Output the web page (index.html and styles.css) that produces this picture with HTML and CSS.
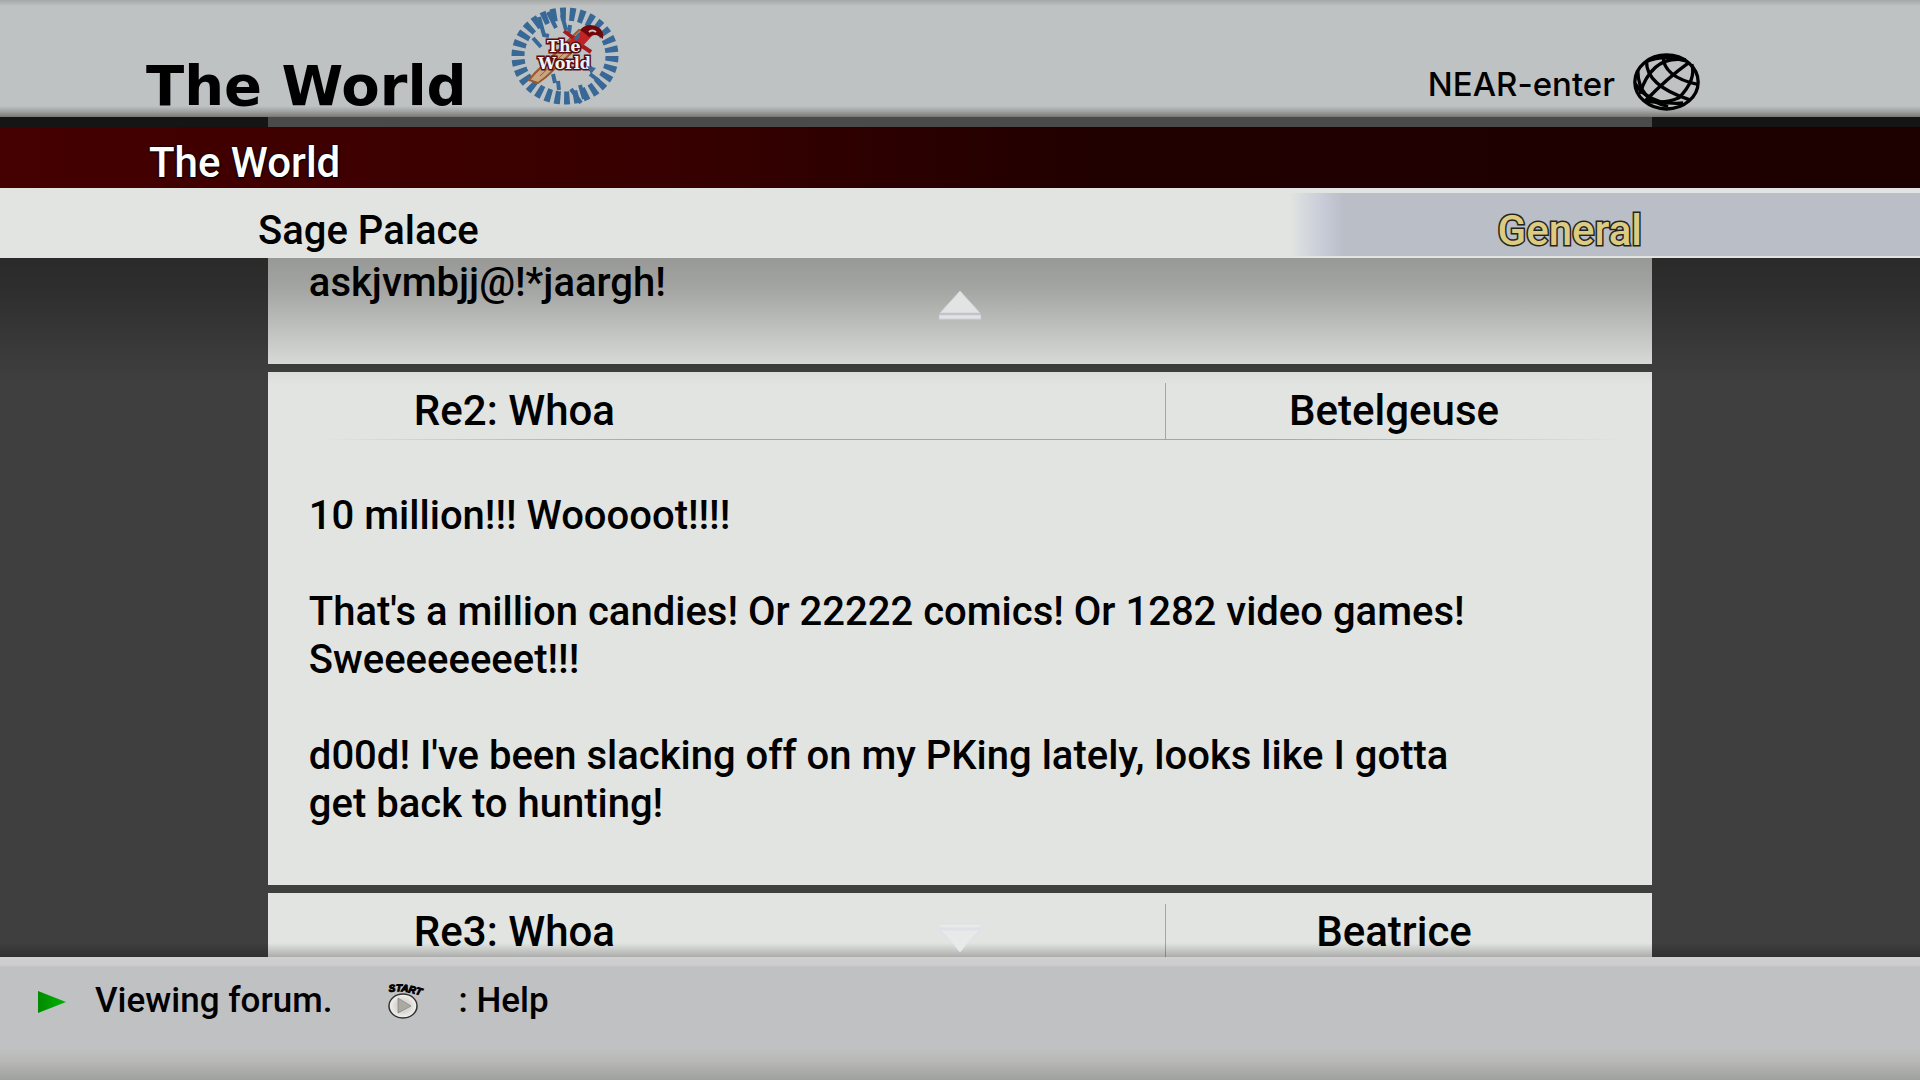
FILE: index.html
```html
<!DOCTYPE html>
<html lang="en">
<head>
<meta charset="utf-8">
<meta name="viewport" content="width=device-width, initial-scale=1">
<title>The World - Sage Palace</title>
<link rel="stylesheet" href="styles.css">
</head>
<body>
<header class="masthead">
  <h1 class="brand">The World</h1>
  <svg class="emblem" viewBox="511 7 110 100" aria-hidden="true">
    <ellipse cx="565" cy="56" rx="47" ry="42" fill="none" stroke="#386896" stroke-width="13" pathLength="300" stroke-dasharray="6 4"/>
    <g fill="none" stroke="#386896" stroke-width="4">
      <path d="M539 17l5 18 5 1M548 12l8 16M533 38l8 9M562 15l4 15M570 25l-1 8M555 83l-2 -9M559 90l-1 -9M571 89l10 14M580 85l4 14M590 74l9 7M541 57l5 8"/>
    </g>
    <path d="M529 80l6-7 44-43 10 6-43 41-8 6z" fill="#c9a584" stroke="#9a5a2a" stroke-width="2"/>
    <path d="M540 76l42-40M535 74l40-38" fill="none" stroke="#a25b33" stroke-width="1"/>
    <path d="M576 42l15 10M564 31l16 12 8-14" fill="none" stroke="#a51a1c" stroke-width="4"/>
    <path d="M568 42l17-14 8 7-14 15z" fill="#c22326"/>
    <path d="M580 30q7-8 18-3 6 3 5 12-7-7-14-2-4-4-9-7z" fill="#6f080b"/>
    <path d="M589 32q3-3 7 0" fill="none" stroke="#d5c2c2" stroke-width="2"/>
    <path d="M574 38l5-6 1 5-4 4z" fill="#386896"/>
    <g class="emblem-text">
      <text x="547" y="52">The</text>
      <text x="538" y="69">World</text>
    </g>
    <path d="M587 66l9 2-5 6z" fill="#386896"/>
  </svg>
  <div class="area">
    <span class="area-name">NEAR-enter</span>
    <svg class="globe" viewBox="700 38 200 174" aria-hidden="true">
      <g fill="none" stroke="#000" stroke-width="10">
        <ellipse cx="800" cy="125" rx="95" ry="81"/>
        <path d="M790 45Q788 110 897 133"/>
        <path d="M740 62Q738 135 868 178"/>
        <path d="M714 92Q715 180 805 198"/>
        <path d="M868 66Q800 115 736 182"/>
        <path d="M858 59Q758 42 720 160"/>
        <path d="M738 64Q795 40 858 62"/>
        <path d="M876 72Q890 118 838 172 790 192 738 182"/>
        <path d="M706 130Q725 165 780 184 820 192 850 188"/>
      </g>
    </svg>
  </div>
</header>
<div class="slot"><div class="column"></div></div>
<div class="board-bar">The World</div>
<div class="thread-bar">
  <h2 class="thread-name">Sage Palace</h2>
  <div class="category">General</div>
</div>
<main class="forum">
  <div class="column posts">
    <article class="post">
      <div class="post-text"><p>askjvmbjj@!*jaargh!</p></div>
    </article>
    <article class="post">
      <header class="post-head"><h3>Re2: Whoa</h3><span class="author">Betelgeuse</span></header>
      <div class="post-text spaced">
        <p>10 million!!! Wooooot!!!!</p>
        <p>That's a million candies! Or 22222 comics! Or 1282 video games!<br>Sweeeeeeeet!!!</p>
        <p>d00d! I've been slacking off on my PKing lately, looks like I gotta<br>get back to hunting!</p>
      </div>
    </article>
    <article class="post">
      <header class="post-head"><h3>Re3: Whoa</h3><span class="author">Beatrice</span></header>
    </article>
  </div>
  <button class="scroll scroll-up" type="button" aria-label="Scroll up">
    <svg viewBox="0 0 42 30"><path d="M21 1L41 23H1z"/><path d="M0 25h42v4H0z"/></svg>
  </button>
  <button class="scroll scroll-down" type="button" aria-label="Scroll down">
    <svg viewBox="0 0 42 30"><path d="M0 1h42v4H0z"/><path d="M1 7h40L21 29z"/></svg>
  </button>
</main>
<footer class="status">
  <svg class="marker" viewBox="0 0 28 24" aria-hidden="true">
    <defs><linearGradient id="mg"><stop offset="0" stop-color="#008a00"/><stop offset="1" stop-color="#00b400"/></linearGradient></defs>
    <path d="M0 1L28 12 0 23z" fill="url(#mg)"/>
  </svg>
  <span class="message">Viewing forum.</span>
  <button class="help" type="button">
    <svg class="start" viewBox="0 0 36 38" aria-hidden="true">
      <defs>
        <path id="arc" d="M1 10Q18 7 42 17"/>
        <radialGradient id="sg"><stop offset=".5" stop-color="#d8d7d4"/><stop offset="1" stop-color="#f4f3ef"/></radialGradient>
      </defs>
      <text class="start-text"><textPath href="#arc">START</textPath></text>
      <ellipse cx="15" cy="24" rx="14" ry="12" fill="url(#sg)" stroke="#33312f" stroke-width="1.5"/>
      <path d="M10 16L23 24 10 31z" fill="#aaa9a2" stroke="#777" stroke-width=".6"/>
    </svg>
    <span>: Help</span>
  </button>
</footer>
</body>
</html>
```
FILE: styles.css
```css
* { box-sizing: border-box; }

body {
  margin: 0;
  height: 100vh;
  display: flex;
  flex-direction: column;
  overflow: hidden;
  background: #3f3f3f;
  color: #000;
  font-family: Roboto, "Liberation Sans", sans-serif;
  font-weight: 500;
  font-size: 40px;
  line-height: 48px;
}

h1, h2, h3, p { margin: 0; font-weight: inherit; font-size: inherit; }

button {
  padding: 0;
  border: 0;
  background: none;
  color: inherit;
  font: inherit;
}

svg { display: block; }

.column {
  width: 72.1%;
  margin: 0 auto;
}

/* Top header */
.masthead {
  flex: none;
  height: 117px;
  display: flex;
  align-items: flex-end;
  padding: 0 220px 3px 146px;
  background: linear-gradient(#a6a7a7 0, #bec2c3 6px, #bec2c3 106px, #a3a4a3 111px, #787873 117px);
}

.brand {
  font: bold 56px/56px "DejaVu Sans", sans-serif;
}

.emblem {
  width: 110px;
  height: 100px;
  margin: 0 0 7px 44px;
}

.emblem-text {
  font: bold 16px "DejaVu Serif", serif;
  fill: #e6f6fa;
  stroke: #5d0a10;
  stroke-width: 3px;
  paint-order: stroke;
}

.area {
  margin-left: auto;
  display: flex;
  align-items: center;
  gap: 18px;
  padding-bottom: 3px;
}

.area-name {
  padding-top: 4px;
  font: 500 33px/40px Inter, sans-serif;
}

.globe {
  width: 67px;
  height: 58px;
}

.slot {
  flex: none;
  height: 10px;
  background: #151515;
}

.slot .column {
  height: 100%;
  background: #4a4a4a;
}

/* Board and thread titles */
.board-bar {
  flex: none;
  height: 61px;
  padding: 12px 149px 0;
  background: linear-gradient(90deg, #450000, #380000 35%, #220000 56%, #1d0000);
  color: #fff;
  font-size: 42px;
  text-shadow: 0 0 2px #000, 0 0 2px #000, 1px 1px 1px #000;
}

.thread-bar {
  flex: none;
  height: 70px;
  display: flex;
  justify-content: space-between;
  padding: 5px 0 2px 258px;
  background: #e2e4e1;
}

.thread-name { padding-top: 14px; }

.category {
  width: 630px;
  padding: 14px 278px 0 0;
  background: linear-gradient(90deg, #e2e4e1, #c6cbd7 34px, #b9bec7 54px);
  color: #dccb80;
  font-size: 42px;
  text-align: right;
  -webkit-text-stroke: 3px #24241f;
  paint-order: stroke;
}

/* Post list */
.forum {
  flex: 1;
  min-height: 0;
  position: relative;
  overflow: hidden;
}

.forum::after {
  content: "";
  position: absolute;
  inset: 0;
  pointer-events: none;
  background:
    linear-gradient(rgba(0, 0, 0, .33), rgba(0, 0, 0, .28) 30px, rgba(0, 0, 0, .05) 105px, transparent 128px),
    linear-gradient(0deg, rgba(0, 0, 0, .24), transparent 14px);
}

.posts {
  display: grid;
  gap: 8px;
}

.post { background: #e2e4e1; }

.post-head {
  display: grid;
  grid-template-columns: 1fr 35.2%;
  height: 68px;
  padding-top: 11px;
  font-size: 42px;
  border-bottom: 1px solid;
  border-image: linear-gradient(90deg, transparent 4%, #a4a6a4 28%, #a4a6a4 72%, transparent 98%) 1;
}

.post-head h3 { padding: 4px 0 0 146px; }

.author {
  padding: 4px 30px 0 0;
  border-left: 1px solid #a4a6a4;
  text-align: center;
}

.post-text {
  display: grid;
  gap: 48px;
  padding: 1px 41px 57px;
}

.spaced { padding-top: 52px; }

.scroll {
  position: absolute;
  z-index: 1;
  left: 50%;
  width: 42px;
  height: 30px;
  margin-left: -21px;
  fill: #e2e4e3;
  stroke: #cfd1de;
  stroke-width: 1px;
}

.scroll-up { top: 32px; }

.scroll-down {
  bottom: 4px;
  fill: #e8eae9;
  stroke: #dcdeea;
}

/* Status line */
.status {
  flex: none;
  height: 123px;
  display: flex;
  align-items: flex-start;
  padding: 20px 38px;
  font-size: 35px;
  background: linear-gradient(#d0d0d2 0, #cdcdcf 8px, #c0c1c3 10px, #c0c1c3 90px, #b8b8b6 104px, #9fa19e 123px);
}

.marker {
  width: 28px;
  height: 24px;
  margin: 13px 29px 0 0;
}

.help {
  display: flex;
  gap: 34px;
  margin-left: 56px;
}

.start {
  width: 36px;
  height: 38px;
  margin-top: 5px;
  overflow: visible;
}

.start-text {
  font: italic bold 10px "Liberation Sans", sans-serif;
  stroke: #000;
  stroke-width: 1px;
}
```
